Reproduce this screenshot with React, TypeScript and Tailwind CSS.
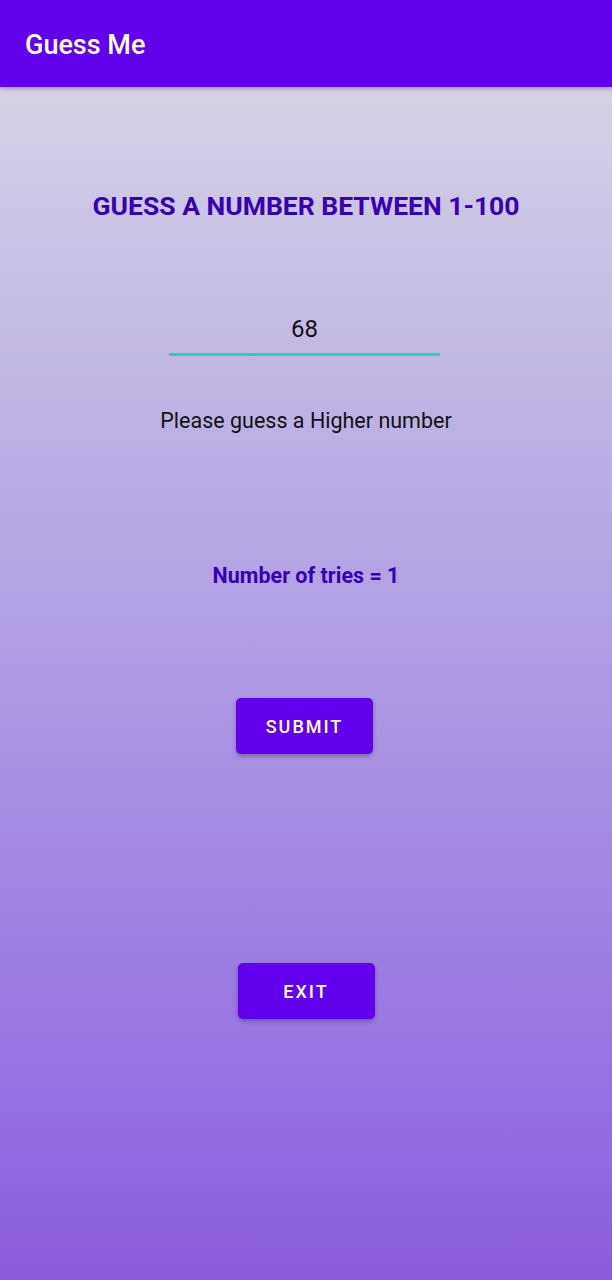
import React from "react";

export default function App() {
  return (
    <div className="w-[612px] h-[1280px] flex flex-col font-['Roboto',sans-serif]">
      <div className="h-[87px] bg-[#6200ee] flex items-center pl-[25px] shadow-[0_2px_4px_rgba(0,0,0,0.25)] z-10">
        <span className="text-white text-[27px] font-medium leading-none mt-[3px]">Guess Me</span>
      </div>
      <div className="flex-1 bg-gradient-to-b from-[#d4d1e4] to-[#8a5cde] flex flex-col items-center">
        <h1 className="mt-[104px] text-[#3700b3] text-[26.5px] leading-[30px] font-bold">
          GUESS A NUMBER BETWEEN 1-100
        </h1>
        <div className="mt-[94px] mr-[3px] w-[271px] flex flex-col items-center">
          <span className="text-[#111] text-[24px] leading-[28px]">68</span>
          <div className="mt-[10px] w-full h-[3px] bg-[#2ccbc9]" />
        </div>
        <p className="mt-[52px] text-[#111] text-[21.5px] leading-[26px]">Please guess a Higher number</p>
        <p className="mt-[129px] text-[#3700b3] text-[21.5px] leading-[26px] font-bold">Number of tries = 1</p>
        <button className="mt-[109px] mr-[3px] w-[137px] h-[56px] rounded-[5px] bg-[#6200ee] text-white text-[18px] font-medium tracking-[2px] shadow-[0_2px_4px_rgba(0,0,0,0.3)]">
          SUBMIT
        </button>
        <button className="mt-[209px] w-[137px] h-[56px] rounded-[5px] bg-[#6200ee] text-white text-[18px] font-medium tracking-[2px] shadow-[0_2px_4px_rgba(0,0,0,0.3)]">
          EXIT
        </button>
      </div>
    </div>
  );
}
